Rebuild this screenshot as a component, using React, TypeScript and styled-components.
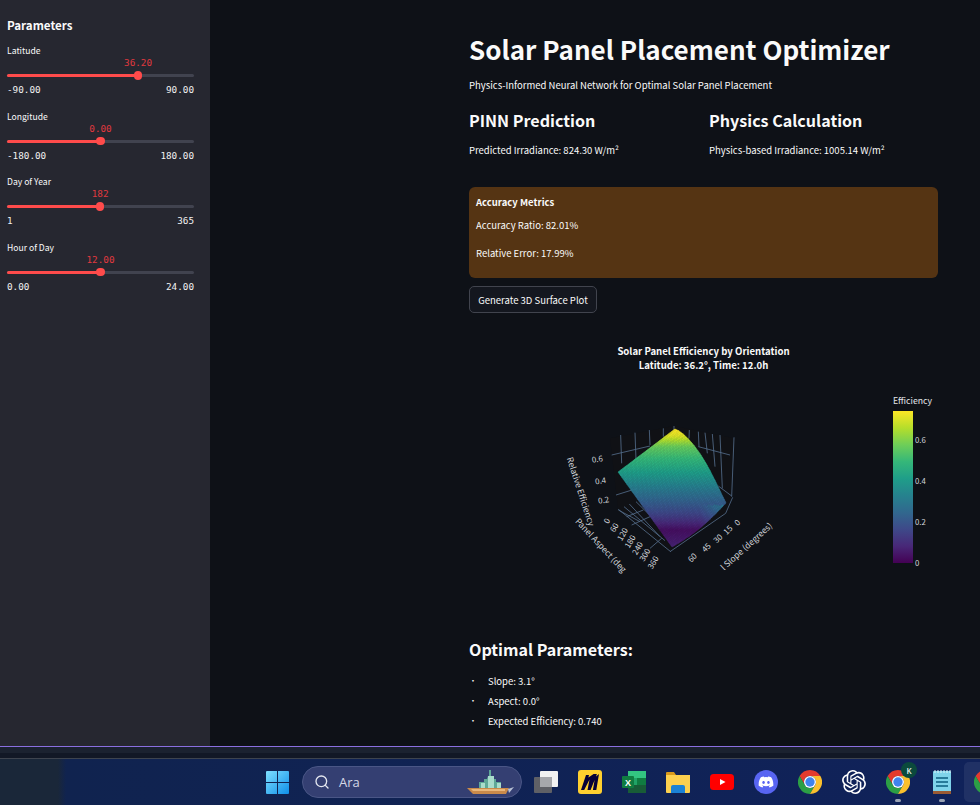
import React from "react";
import styled, { createGlobalStyle } from "styled-components";
import { Search } from "lucide-react";
import { FaDiscord } from "react-icons/fa";
import { SiOpenai } from "react-icons/si";

const SANS = `"Noto Sans CJK SC", "Noto Sans", sans-serif`;
const MONO = `"DejaVu Sans Mono", "Liberation Mono", monospace`;

const Global = createGlobalStyle`
  html, body { margin: 0; padding: 0; background: #0e1117; }
  body { width: 980px; height: 805px; overflow: hidden; font-family: ${SANS}; }
  * { box-sizing: border-box; }
`;

const Page = styled.div`
  width: 980px;
  height: 805px;
  display: flex;
  flex-direction: column;
  overflow: hidden;
`;
const Workspace = styled.div`
  height: 746px;
  display: flex;
  flex: none;
`;
const Sidebar = styled.aside`
  width: 210px;
  flex: none;
  background: #262730;
  padding: 15px 16px 0 7px;
`;
const SideTitle = styled.h2`
  margin: 0 0 8px;
  font-size: 11.6px;
  line-height: 20px;
  font-weight: 600;
  color: #fafafa;
`;
const SliderBlock = styled.div`
  height: 65.6px;
`;
const SliderLabel = styled.div`
  font-size: 8.6px;
  line-height: 14px;
  color: #fafafa;
  height: 14px;
`;
const ValueRow = styled.div`
  position: relative;
  height: 12px;
`;
const ValueText = styled.span`
  position: absolute;
  top: 0;
  transform: translateX(-50%);
  font-family: ${MONO};
  font-size: 9.3px;
  line-height: 12px;
  color: #e0393f;
`;
const Track = styled.div`
  position: relative;
  height: 3px;
  margin-top: 5px;
  border-radius: 2px;
  background: #41434f;
`;
const TrackFill = styled.div`
  height: 100%;
  border-radius: 2px;
  background: #ff4b4b;
`;
const Thumb = styled.div`
  position: absolute;
  top: -3px;
  width: 8.5px;
  height: 8.5px;
  margin-left: -4.2px;
  border-radius: 50%;
  background: #ff4b4b;
`;
const Bounds = styled.div`
  display: flex;
  justify-content: space-between;
  margin-top: 6px;
  font-family: ${MONO};
  font-size: 9.3px;
  line-height: 13px;
  color: #f2f2f2;
`;

const Main = styled.main`
  flex: 1;
  background: #0e1117;
  padding: 29px 42px 0 259px;
  color: #fafafa;
`;
const Title = styled.h1`
  margin: 0;
  font-size: 26px;
  line-height: 40px;
  font-weight: 700;
  color: #fafafa;
  white-space: nowrap;
`;
const Lead = styled.p`
  margin: 6px 0 0;
  font-size: 9.5px;
  line-height: 20px;
`;
const Columns = styled.div`
  display: grid;
  grid-template-columns: 240px 1fr;
  margin-top: 13px;
`;
const SectionTitle = styled.h2`
  margin: 0;
  font-size: 16.1px;
  line-height: 24px;
  font-weight: 600;
`;
const Reading = styled.p`
  margin: 8px 0 0;
  font-size: 9.5px;
  line-height: 20px;
`;
const Metrics = styled.section`
  height: 91px;
  margin-top: 27px;
  padding: 5px 7px;
  border-radius: 6px;
  background: #553413;
  font-size: 9.5px;
`;
const MetricsHead = styled.div`
  line-height: 20px;
  font-weight: 700;
`;
const MetricLine = styled.div<{ $gap: number }>`
  line-height: 20px;
  margin-top: ${(p) => p.$gap}px;
`;
const GenerateButton = styled.button`
  display: block;
  width: 128px;
  height: 27px;
  margin-top: 8px;
  padding: 0;
  border: 1px solid #41444e;
  border-radius: 5px;
  background: #14171f;
  color: #fafafa;
  font-family: ${SANS};
  font-size: 9.5px;
`;
const PlotFrame = styled.div`
  height: 265px;
  margin-top: 22px;
`;
const PlotSvg = styled.svg`
  display: block;
  width: 469px;
  height: 265px;
  font-family: ${SANS};
`;
const OptimalTitle = styled.h2`
  margin: 37px 0 0;
  font-size: 16.1px;
  line-height: 24px;
  font-weight: 600;
`;
const BulletList = styled.ul`
  margin: 10px 0 0;
  padding: 0;
  list-style: none;
  font-size: 9.5px;
`;
const Bullet = styled.li`
  display: flex;
  height: 20px;
  line-height: 20px;
  &::before {
    content: "•";
    flex: none;
    width: 19px;
    font-size: 8px;
  }
`;

const Strip = styled.div`
  flex: none;
  height: 12px;
  border-top: 1px solid #8a6fe0;
  background: linear-gradient(#1b2230 0 6px, #121826 6px);
`;
const Taskbar = styled.footer`
  flex: 1;
  display: flex;
  align-items: center;
  position: relative;
  border-top: 1px solid #3e444f;
  padding-left: 255px;
  background: linear-gradient(90deg, #1a2739 0, #1a2739 58px, #10234f 66px, #10225a 100%);
`;
const StartSlot = styled.div`
  flex: none;
  width: 44px;
  display: flex;
  align-items: center;
  justify-content: center;
`;
const SearchPill = styled.div`
  flex: none;
  width: 220px;
  height: 32px;
  margin-left: 3px;
  padding: 0 0 0 11px;
  display: flex;
  align-items: center;
  gap: 9px;
  border: 1px solid #4a5686;
  border-radius: 16px;
  background: #343f72;
  color: #d4d8e6;
  font-family: "Open Sans", sans-serif;
  font-size: 13px;
`;
const SearchArt = styled.svg`
  margin-left: auto;
  margin-right: 6px;
  flex: none;
`;
const Apps = styled.div`
  flex: none;
  margin-left: 2px;
  display: flex;
`;
const AppSlot = styled.div<{ $active?: boolean }>`
  flex: none;
  position: relative;
  width: 44px;
  height: 40px;
  display: flex;
  align-items: center;
  justify-content: center;
  border-radius: 5px;
  background: ${(p) => (p.$active ? "rgba(255,255,255,.07)" : "transparent")};
`;
const RunDot = styled.span<{ $color: string }>`
  position: absolute;
  left: 50%;
  bottom: 0;
  width: 6px;
  height: 3px;
  margin-left: -3px;
  border-radius: 2px;
  background: ${(p) => p.$color};
`;
const AccountBadge = styled.span`
  position: absolute;
  top: 0;
  right: 3px;
  width: 16px;
  height: 16px;
  border-radius: 50%;
  display: flex;
  align-items: center;
  justify-content: center;
  background: #0b4a3c;
  color: #e6f2ee;
  font-family: "Open Sans", sans-serif;
  font-size: 8px;
  font-weight: 600;
`;
const DiscordDisc = styled.span`
  width: 24px;
  height: 24px;
  border-radius: 50%;
  display: flex;
  align-items: center;
  justify-content: center;
  background: #5865f2;
  color: #fff;
`;

const VIRIDIS = ["#440154", "#482878", "#3e4989", "#31688e", "#26828e", "#1f9e89", "#35b779", "#6ece58", "#b5de2b", "#fde725"];
function hex(c: string) {
  return [1, 3, 5].map((i) => parseInt(c.slice(i, i + 2), 16));
}
function viridis(t: number) {
  const x = Math.max(0, Math.min(0.9999, t)) * (VIRIDIS.length - 1);
  const i = Math.floor(x);
  const a = hex(VIRIDIS[i]);
  const b = hex(VIRIDIS[i + 1]);
  const f = x - i;
  return `rgb(${a.map((v, k) => Math.round(v + (b[k] - v) * f)).join(",")})`;
}
const O = { x: 469, y: 335 };
const C = { L: [618, 472], T: [675, 429], R: [726, 503], B: [672, 547] };
const COLOR_Y: [number, number][] = [[429, 1], [436, 0.95], [447, 0.76], [472, 0.56], [495, 0.36], [515, 0.2], [530, 0.04], [547, 0.1]];
function colorAt(x: number, y: number) {
  let v = 0;
  for (let i = 0; i < COLOR_Y.length - 1; i++) {
    const [y0, c0] = COLOR_Y[i];
    const [y1, c1] = COLOR_Y[i + 1];
    if (y >= y0 && y <= y1) v = c0 + ((c1 - c0) * (y - y0)) / (y1 - y0);
  }
  if (y > 505 && x > 700) v += (x - 700) * 0.005;
  return viridis(v);
}
function point(s: number, t: number): [number, number] {
  const top = [C.L[0] + (C.T[0] - C.L[0]) * s, C.L[1] + (C.T[1] - C.L[1]) * s];
  const bot = [C.B[0] + (C.R[0] - C.B[0]) * s, C.B[1] + (C.R[1] - C.B[1]) * s];
  let x = top[0] + (bot[0] - top[0]) * t;
  let y = top[1] + (bot[1] - top[1]) * t;
  x += s * s * 8 * Math.sin(Math.PI * Math.pow(t, 0.6));
  y += t * 4 * Math.sin(Math.PI * s);
  return [x - O.x, y - O.y];
}
const N = 44;
const CELLS = (() => {
  const cells: { pts: string; fill: string }[] = [];
  for (let i = 0; i < N; i++) {
    for (let j = 0; j < N; j++) {
      const q = [point(i / N, j / N), point((i + 1) / N, j / N), point((i + 1) / N, (j + 1) / N), point(i / N, (j + 1) / N)];
      const cx = (q[0][0] + q[2][0]) / 2 + O.x;
      const cy = (q[0][1] + q[2][1]) / 2 + O.y;
      cells.push({ pts: q.map((p) => p.map((v) => v.toFixed(1)).join(",")).join(" "), fill: colorAt(cx, cy) });
    }
  }
  return cells;
})();

// zoom-crop coordinates (3x, origin 550,410) to plot coordinates
const zx = (v: number) => v / 3 + 550 - O.x;
const zy = (v: number) => v / 3 + 410 - O.y;
const GRID: number[][] = [
  [212, 75, 215, 160], [255, 68, 258, 150], [298, 60, 300, 105], [340, 55, 340, 80], [372, 48, 372, 60],
  [418, 60, 417, 85], [445, 65, 447, 110], [465, 68, 472, 130], [487, 72, 495, 170], [510, 75, 517, 235], [552, 82, 545, 260],
  [185, 135, 300, 108], [198, 255, 262, 235], [540, 135, 445, 110], [545, 258, 505, 228],
  [205, 298, 362, 425], [222, 290, 345, 392], [238, 282, 330, 380], [258, 275, 350, 365], [280, 270, 360, 345],
  [270, 335, 205, 300], [300, 320, 245, 345], [280, 300, 230, 320], [335, 385, 300, 415],
  [360, 425, 527, 310], [527, 310, 548, 262],
];
const Z_TICKS = [["0.6", 143, 147], ["0.4", 153, 212], ["0.2", 162, 270]] as const;
const ASPECT_TICKS = [["360", 317, 453], ["300", 292, 430], ["240", 270, 410], ["180", 248, 390], ["120", 225, 368], ["60", 200, 348], ["0", 178, 328]] as const;
const SLOPE_TICKS = [["0", 568, 335], ["15", 540, 357], ["30", 510, 383], ["45", 475, 410], ["60", 433, 440]] as const;
const BAR_TICKS = [["0.6", 440], ["0.4", 481], ["0.2", 522], ["0", 563]] as const;

const SurfacePlot = () => (
  <PlotSvg viewBox="0 0 469 265">
    <defs>
      <linearGradient id="bar" x1="0" y1="1" x2="0" y2="0">
        {VIRIDIS.map((c, i) => <stop key={c} offset={i / (VIRIDIS.length - 1)} stopColor={c} />)}
      </linearGradient>
    </defs>
    <g fill="#fafafa" fontSize="9.6" fontWeight="700" textAnchor="middle">
      <text x="234.5" y="20">Solar Panel Efficiency by Orientation</text>
      <text x="234.5" y="34">Latitude: 36.2°, Time: 12.0h</text>
    </g>
    <polygon
      fill="#101115"
      points={[[180, 85], [372, 48], [555, 85], [545, 262], [527, 312], [360, 428], [205, 302]].map(([a, b]) => `${zx(a)},${zy(b)}`).join(" ")}
    />
    <g stroke="#55708f" strokeWidth="0.8">
      {GRID.map((g) => <line key={g.join()} x1={zx(g[0])} y1={zy(g[1])} x2={zx(g[2])} y2={zy(g[3])} />)}
    </g>
    <g>{CELLS.map((c) => <polygon key={c.pts} points={c.pts} fill={c.fill} stroke={c.fill} strokeWidth="0.5" />)}</g>
    <g fill="#d3d6db" fontSize="8" textAnchor="middle">
      {Z_TICKS.map(([t, x, y]) => <text key={t} transform={`translate(${zx(x)} ${zy(y) + 3}) rotate(-8)`}>{t}</text>)}
      {ASPECT_TICKS.map(([t, x, y]) => <text key={t} transform={`translate(${zx(x)} ${zy(y) + 3}) rotate(-60)`}>{t}</text>)}
      {SLOPE_TICKS.map(([t, x, y]) => <text key={t} transform={`translate(${zx(x)} ${zy(y) + 3}) rotate(-45)`}>{t}</text>)}
    </g>
    <g fill="#d3d6db" fontSize="8.5">
      <text transform={`translate(${zx(50)} ${zy(145)}) rotate(72)`}>Relative Efficiency</text>
      <text transform={`translate(${zx(74)} ${zy(335)}) rotate(47)`}>Panel Aspect (deg</text>
      <text transform={`translate(${zx(522)} ${zy(482)}) rotate(-42)`}>l Slope (degrees)</text>
    </g>
    <text x={893 - O.x} y={404 - O.y} fill="#e4e6ea" fontSize="8.7">Efficiency</text>
    <rect x={893 - O.x} y={411 - O.y} width="20" height="152" fill="url(#bar)" />
    <g fill="#d3d6db" fontSize="7.8">
      {BAR_TICKS.map(([t, y]) => <text key={t} x={915 - O.x} y={y - O.y + 3}>{t}</text>)}
    </g>
  </PlotSvg>
);

const WinLogo = () => (
  <svg width="23" height="23" viewBox="0 0 23 23">
    <defs>
      <linearGradient id="win" x1="0" y1="0" x2="1" y2="1">
        <stop offset="0" stopColor="#7fe0ff" />
        <stop offset="1" stopColor="#0f8fe8" />
      </linearGradient>
    </defs>
    <path fill="url(#win)" d="M1 0h10v11H0V1a1 1 0 0 1 1-1zM12 0h10a1 1 0 0 1 1 1v10H12zM0 12h11v11H1a1 1 0 0 1-1-1zM12 12h11v10a1 1 0 0 1-1 1H12z" />
  </svg>
);
const Monument = () => (
  <SearchArt width="48" height="30" viewBox="0 0 48 30">
    <path fill="#5fa897" d="M12 22v-7h5v-3h3l1-3h1V3h2v6h1l1 3h3v3h5v7z" />
    <path fill="#a9dccb" d="M21 9h6v13h-6zM14 16h4v6h-4zM30 16h4v6h-4z" />
    <path fill="#c98a4a" d="M0 21h42l-3 6H6z" />
    <path fill="#e9b77a" d="M4 22h34v2H6z" />
    <path fill="#b9c2d6" d="M41 22l6-2-5 6z" />
  </SearchArt>
);
const TaskView = () => (
  <svg width="24" height="22" viewBox="0 0 24 22">
    <rect x="0" y="6" width="18" height="16" rx="1" fill="#5f6066" />
    <rect x="6" y="0" width="18" height="16" rx="1" fill="#f2f2f2" />
    <rect x="6" y="6" width="12" height="10" fill="#a6a7ab" />
  </svg>
);
const Miro = () => (
  <svg width="24" height="24" viewBox="0 0 24 24">
    <rect width="24" height="24" rx="3" fill="#ffd02f" />
    <path fill="#050038" d="M15.6 4h3.3l-.9 2.6L21 4l-2.7 16h-3.4l1.7-10-4 10H9.5l2-10.5L6.2 20H3L8 5h3l-.6 2.5L15.6 4z" />
  </svg>
);
const ExcelText = styled.text`
  font-family: "Liberation Sans", sans-serif;
  font-size: 9px;
  font-weight: 700;
  fill: #ffffff;
`;
const Excel = () => (
  <svg width="24" height="22" viewBox="0 0 24 22">
    <rect x="6" y="0" width="18" height="7" fill="#33c481" />
    <rect x="6" y="7" width="9" height="7" fill="#21a366" />
    <rect x="15" y="7" width="9" height="7" fill="#107c41" />
    <rect x="6" y="14" width="18" height="8" fill="#185c37" />
    <rect x="0" y="5" width="12" height="12" rx="1" fill="#107c41" />
    <ExcelText x="6" y="14.5" textAnchor="middle">X</ExcelText>
  </svg>
);
const Folder = () => (
  <svg width="24" height="22" viewBox="0 0 24 22">
    <path fill="#d99a1c" d="M0 2a1 1 0 0 1 1-1h7l2 3h14v3H0z" />
    <path fill="#fcd04f" d="M0 4h24v17a1 1 0 0 1-1 1H1a1 1 0 0 1-1-1z" />
    <path fill="#1b82d6" d="M5 16a2 2 0 0 1 2-2h10a2 2 0 0 1 2 2v6H5z" />
  </svg>
);
const YouTube = () => (
  <svg width="24" height="16" viewBox="0 0 24 16">
    <rect width="24" height="16" rx="3.5" fill="#f00" />
    <path fill="#fff" d="M10 5l5.5 3-5.5 3z" />
  </svg>
);
const Chrome = () => (
  <svg width="24" height="24" viewBox="0 0 24 24">
    <path fill="#e33b2e" d="M12 0A12 12 0 0 0 1.6 6l5.2 9A6 6 0 0 1 12 6h10.4A12 12 0 0 0 12 0z" />
    <path fill="#2c9f45" d="M1.6 6A12 12 0 0 0 12 24l5.2-9A6 6 0 0 1 6.8 15z" />
    <path fill="#fbc02d" d="M12 6h10.4A12 12 0 0 1 12 24l5.2-9A6 6 0 0 0 12 6z" />
    <circle cx="12" cy="12" r="6" fill="#fff" />
    <circle cx="12" cy="12" r="4.7" fill="#3f83ee" />
  </svg>
);
const Notepad = () => (
  <svg width="18" height="24" viewBox="0 0 18 24">
    <rect x="0" y="1" width="18" height="23" rx="1" fill="#7fd3ea" />
    <rect x="0" y="21" width="18" height="3" fill="#9a5a33" />
    <path stroke="#0d5f80" strokeWidth="1.6" d="M3 8h12M3 12h12M3 16h12" />
    <path stroke="#dff4fa" strokeWidth="1" d="M2 0v3M5 0v3M8 0v3M11 0v3M14 0v3M17 0v3" />
  </svg>
);

const SLIDERS = [
  { label: "Latitude", value: "36.20", min: "-90.00", max: "90.00", pct: 70.1 },
  { label: "Longitude", value: "0.00", min: "-180.00", max: "180.00", pct: 50 },
  { label: "Day of Year", value: "182", min: "1", max: "365", pct: 49.8 },
  { label: "Hour of Day", value: "12.00", min: "0.00", max: "24.00", pct: 50 },
];

export default function App() {
  return (
    <Page>
      <Global />
      <Workspace>
        <Sidebar>
          <SideTitle>Parameters</SideTitle>
          {SLIDERS.map((s) => (
            <SliderBlock key={s.label}>
              <SliderLabel>{s.label}</SliderLabel>
              <ValueRow>
                <ValueText style={{ left: `${s.pct}%` }}>{s.value}</ValueText>
              </ValueRow>
              <Track>
                <TrackFill style={{ width: `${s.pct}%` }} />
                <Thumb style={{ left: `${s.pct}%` }} />
              </Track>
              <Bounds>
                <span>{s.min}</span>
                <span>{s.max}</span>
              </Bounds>
            </SliderBlock>
          ))}
        </Sidebar>
        <Main>
          <Title>Solar Panel Placement Optimizer</Title>
          <Lead>Physics-Informed Neural Network for Optimal Solar Panel Placement</Lead>
          <Columns>
            <div>
              <SectionTitle>PINN Prediction</SectionTitle>
              <Reading>Predicted Irradiance: 824.30 W/m²</Reading>
            </div>
            <div>
              <SectionTitle>Physics Calculation</SectionTitle>
              <Reading>Physics-based Irradiance: 1005.14 W/m²</Reading>
            </div>
          </Columns>
          <Metrics>
            <MetricsHead>Accuracy Metrics</MetricsHead>
            <MetricLine $gap={3}>Accuracy Ratio: 82.01%</MetricLine>
            <MetricLine $gap={8}>Relative Error: 17.99%</MetricLine>
          </Metrics>
          <GenerateButton>Generate 3D Surface Plot</GenerateButton>
          <PlotFrame>
            <SurfacePlot />
          </PlotFrame>
          <OptimalTitle>Optimal Parameters:</OptimalTitle>
          <BulletList>
            <Bullet>Slope: 3.1°</Bullet>
            <Bullet>Aspect: 0.0°</Bullet>
            <Bullet>Expected Efficiency: 0.740</Bullet>
          </BulletList>
        </Main>
      </Workspace>
      <Strip />
      <Taskbar>
        <StartSlot><WinLogo /></StartSlot>
        <SearchPill>
          <Search size={16} color="#e4e7f0" />
          Ara
          <Monument />
        </SearchPill>
        <Apps>
          <AppSlot><TaskView /></AppSlot>
          <AppSlot><Miro /></AppSlot>
          <AppSlot><Excel /></AppSlot>
          <AppSlot><Folder /></AppSlot>
          <AppSlot><YouTube /></AppSlot>
          <AppSlot><DiscordDisc><FaDiscord size={16} /></DiscordDisc></AppSlot>
          <AppSlot><Chrome /></AppSlot>
          <AppSlot><SiOpenai size={24} color="#fff" /></AppSlot>
          <AppSlot>
            <Chrome />
            <AccountBadge>K</AccountBadge>
            <RunDot $color="#9aa3b5" />
          </AppSlot>
          <AppSlot><Notepad /><RunDot $color="#9aa3b5" /></AppSlot>
          <AppSlot $active><Chrome /><RunDot $color="#4aa8e8" /></AppSlot>
        </Apps>
      </Taskbar>
    </Page>
  );
}
